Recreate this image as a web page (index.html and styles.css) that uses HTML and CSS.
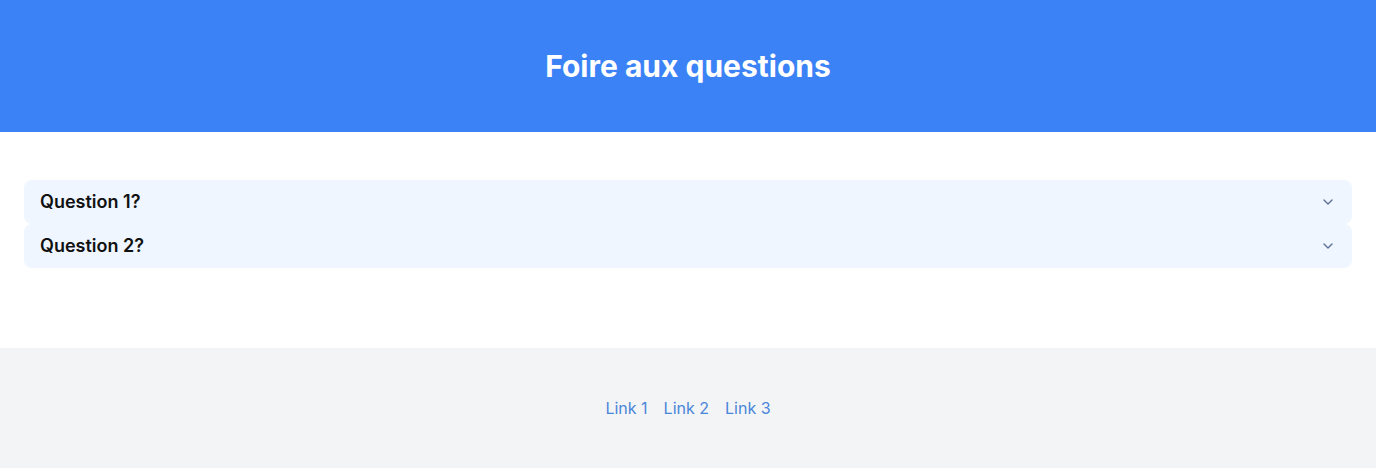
FILE: index.html
```html
<!DOCTYPE html>
<html lang="fr">
<head>
<meta charset="utf-8">
<title>Foire aux questions</title>
<link rel="stylesheet" href="styles.css">
</head>
<body>
<header class="hero">
  <h1 class="hero-title">Foire aux questions</h1>
</header>
<main class="faq">
  <div class="faq-item">
    <button class="faq-q" type="button"><span>Question 1?</span>
      <svg class="chev" viewBox="0 0 24 24" width="16" height="16" fill="none" stroke="currentColor" stroke-width="2" stroke-linecap="round" stroke-linejoin="round"><path d="m6 9 6 6 6-6"/></svg>
    </button>
  </div>
  <div class="faq-item">
    <button class="faq-q" type="button"><span>Question 2?</span>
      <svg class="chev" viewBox="0 0 24 24" width="16" height="16" fill="none" stroke="currentColor" stroke-width="2" stroke-linecap="round" stroke-linejoin="round"><path d="m6 9 6 6 6-6"/></svg>
    </button>
  </div>
</main>
<footer class="foot">
  <nav class="foot-links">
    <a href="#">Link 1</a>
    <a href="#">Link 2</a>
    <a href="#">Link 3</a>
  </nav>
</footer>
</body>
</html>
```

FILE: styles.css
```css
* { box-sizing: border-box; }
html, body { margin: 0; padding: 0; }
body {
  font-family: Inter, "Noto Sans", "Liberation Sans", sans-serif;
  color: #111827;
  background: #ffffff;
}
.hero {
  background: #3b82f6;
  padding: 48px 16px;
  text-align: center;
}
.hero-title {
  margin: 0;
  color: #ffffff;
  font-size: 30px;
  line-height: 36px;
  font-weight: 700;
}
.faq {
  padding: 48px 24px 80px;
  display: flex;
  flex-direction: column;
}
.faq-item {
  background: #eff6ff;
  border-radius: 8px;
}
.faq-q {
  width: 100%;
  border: 0;
  background: transparent;
  display: flex;
  align-items: center;
  justify-content: space-between;
  padding: 8px 16px;
  font-family: inherit;
  font-size: 18px;
  line-height: 28px;
  font-weight: 600;
  color: #111111;
  text-align: left;
  cursor: pointer;
}
.chev { color: #5a7096; flex: none; }
.foot {
  background: #f3f4f6;
  padding: 48px 16px;
}
.foot-links {
  display: flex;
  justify-content: center;
  gap: 16px;
  font-size: 16px;
  line-height: 24px;
}
.foot-links a {
  color: #4a86d9;
  text-decoration: none;
}
```
